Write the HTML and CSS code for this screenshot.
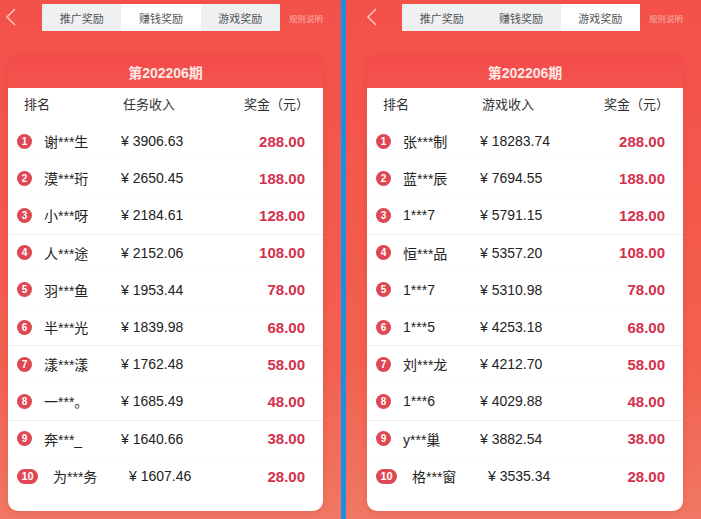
FILE: index.html
```html
<!DOCTYPE html>
<html lang="zh-CN">
<head>
    <meta charset="UTF-8">
    <meta name="viewport" content="width=device-width, initial-scale=1.0">
    <title>排行榜</title>
    <link rel="stylesheet" href="styles.css">
</head>
<body>
<div class="screens">
    <div class="panel panel-left">
        <div class="topbar">
            <svg class="back" width="12" height="18" viewBox="0 0 12 18"><path d="M10 1 L2 9 L10 17" fill="none" stroke="#f9c4bb" stroke-width="1.6"/></svg>
            <div class="tabs">
                <span class="tab">推广奖励</span>
                <span class="tab active">赚钱奖励</span>
                <span class="tab">游戏奖励</span>
            </div>
            <span class="rules">规则说明</span>
        </div>
        <div class="card">
            <div class="card-title">第202206期</div>
            <div class="card-body">
                <div class="row head"><span></span><span>排名</span><span>任务收入</span><span class="r">奖金（元）</span></div>
                <div class="row"><span class="badge">1</span><span>谢***生</span><span>¥ 3906.63</span><span class="prize">288.00</span></div>
                <div class="row"><span class="badge">2</span><span>漠***珩</span><span>¥ 2650.45</span><span class="prize">188.00</span></div>
                <div class="row line"><span class="badge">3</span><span>小***呀</span><span>¥ 2184.61</span><span class="prize">128.00</span></div>
                <div class="row"><span class="badge">4</span><span>人***途</span><span>¥ 2152.06</span><span class="prize">108.00</span></div>
                <div class="row"><span class="badge">5</span><span>羽***鱼</span><span>¥ 1953.44</span><span class="prize">78.00</span></div>
                <div class="row line"><span class="badge">6</span><span>半***光</span><span>¥ 1839.98</span><span class="prize">68.00</span></div>
                <div class="row"><span class="badge">7</span><span>漾***漾</span><span>¥ 1762.48</span><span class="prize">58.00</span></div>
                <div class="row line"><span class="badge">8</span><span>一***。</span><span>¥ 1685.49</span><span class="prize">48.00</span></div>
                <div class="row"><span class="badge">9</span><span>奔***_</span><span>¥ 1640.66</span><span class="prize">38.00</span></div>
                <div class="row wide"><span class="badge">10</span><span>为***务</span><span>¥ 1607.46</span><span class="prize">28.00</span></div>
            </div>
        </div>
    </div>
    <div class="divider"></div>
    <div class="panel panel-right">
        <div class="topbar">
            <svg class="back" width="12" height="18" viewBox="0 0 12 18"><path d="M10 1 L2 9 L10 17" fill="none" stroke="#f9c4bb" stroke-width="1.6"/></svg>
            <div class="tabs">
                <span class="tab">推广奖励</span>
                <span class="tab">赚钱奖励</span>
                <span class="tab active">游戏奖励</span>
            </div>
            <span class="rules">规则说明</span>
        </div>
        <div class="card">
            <div class="card-title">第202206期</div>
            <div class="card-body">
                <div class="row head"><span></span><span>排名</span><span>游戏收入</span><span class="r">奖金（元）</span></div>
                <div class="row"><span class="badge">1</span><span>张***制</span><span>¥ 18283.74</span><span class="prize">288.00</span></div>
                <div class="row"><span class="badge">2</span><span>蓝***辰</span><span>¥ 7694.55</span><span class="prize">188.00</span></div>
                <div class="row line"><span class="badge">3</span><span>1***7</span><span>¥ 5791.15</span><span class="prize">128.00</span></div>
                <div class="row"><span class="badge">4</span><span>恒***品</span><span>¥ 5357.20</span><span class="prize">108.00</span></div>
                <div class="row"><span class="badge">5</span><span>1***7</span><span>¥ 5310.98</span><span class="prize">78.00</span></div>
                <div class="row line"><span class="badge">6</span><span>1***5</span><span>¥ 4253.18</span><span class="prize">68.00</span></div>
                <div class="row"><span class="badge">7</span><span>刘***龙</span><span>¥ 4212.70</span><span class="prize">58.00</span></div>
                <div class="row line"><span class="badge">8</span><span>1***6</span><span>¥ 4029.88</span><span class="prize">48.00</span></div>
                <div class="row"><span class="badge">9</span><span>y***巢</span><span>¥ 3882.54</span><span class="prize">38.00</span></div>
                <div class="row wide"><span class="badge">10</span><span>格***窗</span><span>¥ 3535.34</span><span class="prize">28.00</span></div>
            </div>
        </div>
    </div>
</div>
</body>
</html>
```

FILE: styles.css
```css
* { box-sizing: border-box; }
body {
    margin: 0;
    width: 701px;
    height: 519px;
    overflow: hidden;
    font-family: "Liberation Sans", "Noto Sans CJK SC", sans-serif;
    color: #222;
}
.screens { display: flex; height: 519px; }
.divider { width: 5px; background: #1e8de2; }
.panel {
    height: 519px;
    background: linear-gradient(180deg, #f4504a 0%, #f4574b 30%, #f3604e 70%, #f07864 100%);
}
.panel-left { width: 341px; padding: 0 18px 0 8px; }
.panel-right { width: 355px; padding: 0 18px 0 21px; }

.topbar {
    display: flex;
    align-items: center;
    height: 36px;
}
.panel-left .topbar { margin-left: -3px; }
.panel-right .topbar { margin-left: -1px; }
.back { flex: none; margin-top: -2px; }
.panel-left .back { margin-right: 25px; }
.panel-right .back { margin-right: 24px; }
.tabs {
    display: flex;
    width: 246px;
    height: 27px;
    margin-top: -1px;
    background: #eef0f2;
    border-radius: 1px;
}
.tab {
    flex: 1;
    display: flex;
    align-items: center;
    justify-content: center;
    font-size: 11px;
    color: #555;
}
.tab.active { background: #fff; }
.rules {
    margin-left: 9px;
    font-size: 8.5px;
    color: #f8b3aa;
    white-space: nowrap;
}

.card {
    margin-top: 19px;
    border-radius: 10px;
    overflow: hidden;
    box-shadow: 0 2px 6px rgba(150, 30, 20, 0.15);
}
.card-title {
    height: 33px;
    background: linear-gradient(180deg, #f3484a, #f4564f);
    color: #fde8e4;
    font-size: 14px;
    font-weight: bold;
    display: flex;
    align-items: center;
    justify-content: center;
}
.card-body {
    background: #fff;
    padding-bottom: 16px;
}
.row {
    display: grid;
    grid-template-columns: 27px 77px 1fr auto;
    align-items: center;
    height: 37.2px;
    padding: 0 18px 0 9px;
    font-size: 14px;
    border-bottom: 1px solid #fafafa;
}
.row.line { border-bottom-color: #efefef; }
.row.head {
    height: 35px;
    padding-bottom: 4px;
    padding-left: 13px;
    font-size: 13px;
    color: #333;
    grid-template-columns: 3px 99px 1fr auto;
    border-bottom: none;
}
.row.head .r { margin-right: -4px; }
.row.wide { grid-template-columns: 36px 76px 1fr auto; padding-left: 9px; border-bottom: none; }
.badge {
    width: 15px;
    height: 15px;
    border-radius: 8px;
    background: #de4753;
    color: #fff;
    font-size: 10px;
    font-weight: bold;
    display: flex;
    align-items: center;
    justify-content: center;
}
.wide .badge { width: 21px; font-size: 11px; }
.prize {
    font-size: 15px;
    font-weight: bold;
    color: #d5304c;
    text-align: right;
}
```
